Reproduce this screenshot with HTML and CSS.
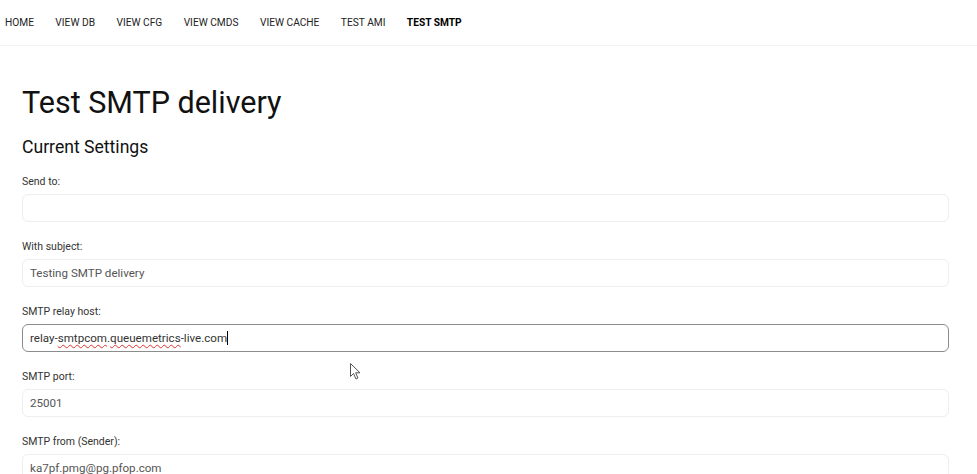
FILE: index.html
```html
<!DOCTYPE html>
<html lang="en">
<head>
    <meta charset="UTF-8">
    <title>Test SMTP delivery</title>
    <link rel="stylesheet" href="styles.css">
</head>
<body>
<nav class="topnav">
    <a href="#">HOME</a>
    <a href="#">VIEW DB</a>
    <a href="#">VIEW CFG</a>
    <a href="#">VIEW CMDS</a>
    <a href="#">VIEW CACHE</a>
    <a href="#">TEST AMI</a>
    <a href="#" class="active">TEST SMTP</a>
</nav>

<main class="page">
    <h1>Test SMTP delivery</h1>
    <h2>Current Settings</h2>

    <form class="settings">
        <div class="group">
            <label for="sendto">Send to:</label>
            <input type="text" id="sendto" class="field">
        </div>
        <div class="group">
            <label for="subject">With subject:</label>
            <input type="text" id="subject" class="field" value="Testing SMTP delivery">
        </div>
        <div class="group">
            <label>SMTP relay host:</label>
            <!-- focused field, with the spell check marks -->
            <div class="field focused">relay-<span class="typo">smtpcom</span>.<span class="typo">queuemetrics</span>-live.com<span class="caret"></span></div>
        </div>
        <div class="group">
            <label for="port">SMTP port:</label>
            <input type="text" id="port" class="field" value="25001">
        </div>
        <div class="group">
            <label for="sender">SMTP from (Sender):</label>
            <input type="text" id="sender" class="field" value="ka7pf.pmg@pg.pfop.com">
        </div>
    </form>
</main>

<svg class="pointer" width="12" height="18" viewBox="0 0 12 18">
    <path d="M0.5 0.5 L0.5 13.5 L3.5 10.5 L6 16 L8 15 L5.6 9.8 L10 9.8 Z" fill="#fff" stroke="#555" stroke-width="1"/>
</svg>
</body>
</html>
```

FILE: styles.css
```css
body{
    margin: 0;
    font-family: Roboto, "Liberation Sans", sans-serif;
    color: #111;
    background: #fff;
}
.topnav{
    display: flex;
    align-items: center;
    gap: 21.4px;
    height: 45px;
    padding-left: 5px;
    border-bottom: 1px solid #f3f3f3;
}
.topnav a{
    font-size: 10.2px;
    color: #222;
    text-decoration: none;
    margin-bottom: 1px;
}
.topnav a.active{
    font-weight: bold;
    color: #000;
}

.page{
    padding: 38px 28px 0 22px;
}
h1{
    margin: 0;
    font-size: 30.5px;
    line-height: 38px;
    font-weight: normal;
}
h2{
    margin: 14px 0 0;
    font-size: 17.6px;
    line-height: 22px;
    font-weight: normal;
}
.settings{
    margin-top: 16px;
}
.group{
    display: flex;
    flex-direction: column;
    gap: 5px;
    margin-bottom: 17px;
}
.group label{
    font-size: 10.5px;
    line-height: 15px;
    color: #333;
}
.field{
    box-sizing: border-box;
    height: 28px;
    padding: 0 7px;
    border: 1px solid #eeeeee;
    border-radius: 6px;
    font-family: inherit;
    font-size: 11.6px;
    line-height: 26px;
    color: #555;
    background: #fff;
    outline: none;
}
.field.focused{
    border-color: #8c8c8c;
    color: #333;
}
.typo{
    text-decoration: underline wavy #e03030;
    text-decoration-thickness: 1px;
    text-underline-offset: 2px;
}
.caret{
    display: inline-block;
    width: 1px;
    height: 14px;
    background: #000;
    vertical-align: -3px;
}
.pointer{
    position: absolute;
    left: 350px;
    top: 363px;
}
```
